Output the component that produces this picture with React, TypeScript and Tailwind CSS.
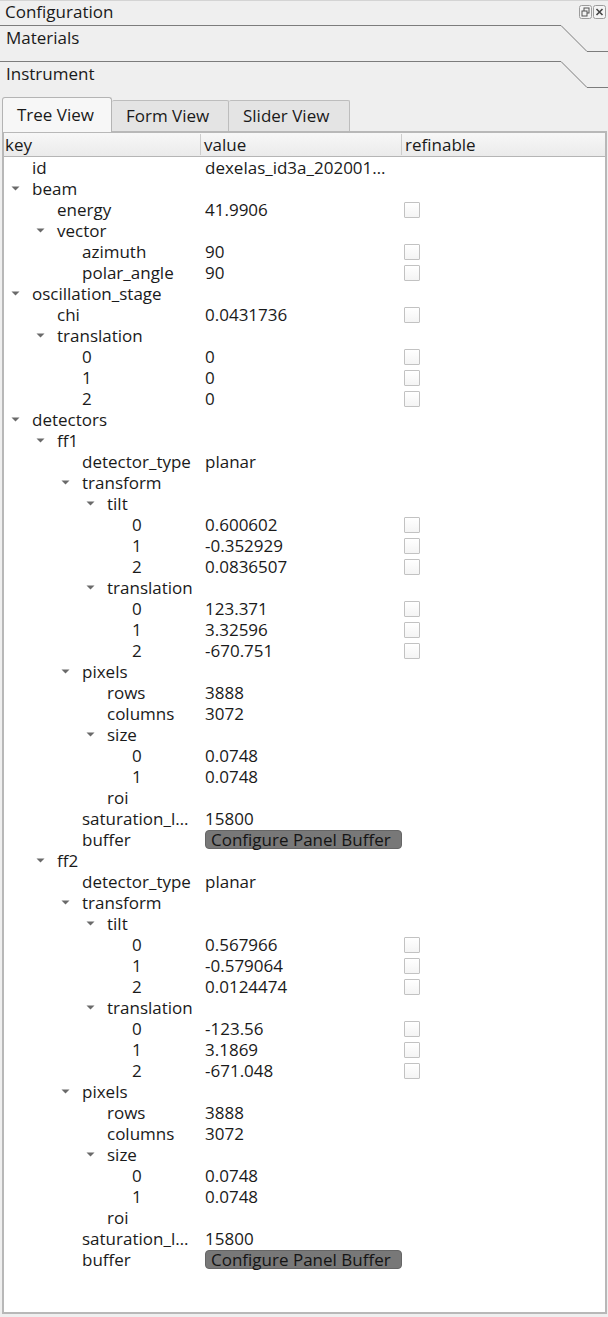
type Row = {
  key: string;
  level: number;
  expanded?: boolean;
  value?: string;
  check?: boolean;
  button?: boolean;
};

const detector = (
  name: string,
  tilt: string[],
  translation: string[],
): Row[] => [
  { key: name, level: 1, expanded: true },
  { key: "detector_type", level: 2, value: "planar" },
  { key: "transform", level: 2, expanded: true },
  { key: "tilt", level: 3, expanded: true },
  ...tilt.map((v, i) => ({ key: String(i), level: 4, value: v, check: true })),
  { key: "translation", level: 3, expanded: true },
  ...translation.map((v, i) => ({
    key: String(i),
    level: 4,
    value: v,
    check: true,
  })),
  { key: "pixels", level: 2, expanded: true },
  { key: "rows", level: 3, value: "3888" },
  { key: "columns", level: 3, value: "3072" },
  { key: "size", level: 3, expanded: true },
  { key: "0", level: 4, value: "0.0748" },
  { key: "1", level: 4, value: "0.0748" },
  { key: "roi", level: 3 },
  { key: "saturation_l…", level: 2, value: "15800" },
  { key: "buffer", level: 2, button: true },
];

const rows: Row[] = [
  { key: "id", level: 0, value: "dexelas_id3a_202001…" },
  { key: "beam", level: 0, expanded: true },
  { key: "energy", level: 1, value: "41.9906", check: true },
  { key: "vector", level: 1, expanded: true },
  { key: "azimuth", level: 2, value: "90", check: true },
  { key: "polar_angle", level: 2, value: "90", check: true },
  { key: "oscillation_stage", level: 0, expanded: true },
  { key: "chi", level: 1, value: "0.0431736", check: true },
  { key: "translation", level: 1, expanded: true },
  { key: "0", level: 2, value: "0", check: true },
  { key: "1", level: 2, value: "0", check: true },
  { key: "2", level: 2, value: "0", check: true },
  { key: "detectors", level: 0, expanded: true },
  ...detector(
    "ff1",
    ["0.600602", "-0.352929", "0.0836507"],
    ["123.371", "3.32596", "-670.751"],
  ),
  ...detector(
    "ff2",
    ["0.567966", "-0.579064", "0.0124474"],
    ["-123.56", "3.1869", "-671.048"],
  ),
];

function SectionHeader({ label }: { label: string }) {
  return (
    <div className="relative h-[36px] px-[6px] pt-[2px]">
      <svg
        className="absolute left-0 top-0"
        width="608"
        height="30"
        viewBox="0 0 608 30"
      >
        <polyline
          points="0,0.5 561,0.5 587,26.5 608,26.5"
          fill="none"
          stroke="#7c7c7c"
          strokeWidth="1"
        />
      </svg>
      <span>{label}</span>
    </div>
  );
}

function Checkbox() {
  return (
    <span className="block h-[16px] w-[16px] rounded-[1px] border border-[#c2c2c2] bg-gradient-to-b from-white to-[#f4f4f4]" />
  );
}

function TreeRow({ row }: { row: Row }) {
  const pad = 28 + row.level * 25;
  return (
    <div className="flex h-[21px] items-center">
      <div className="relative w-[197px] shrink-0 whitespace-nowrap">
        {row.expanded && (
          <svg
            className="absolute top-[8px]"
            style={{ left: pad - 21 }}
            width="9"
            height="5"
            viewBox="0 0 9 5"
          >
            <path d="M0.5 0.5 L8.5 0.5 L4.5 4.5 Z" fill="#6a6a6a" />
          </svg>
        )}
        <span className="block" style={{ paddingLeft: pad }}>
          {row.key}
        </span>
      </div>
      <div className="w-[201px] shrink-0 whitespace-nowrap pl-[4px]">
        {row.button ? (
          <span className="flex h-[19px] w-[197px] items-center rounded-[4px] border border-[#666] bg-[#787878] pl-[5px] text-[#141414]">
            Configure Panel Buffer
          </span>
        ) : (
          row.value
        )}
      </div>
      <div className="pl-[2px]">{row.check && <Checkbox />}</div>
    </div>
  );
}

export default function App() {
  return (
    <div
      className="flex h-[1317px] w-[608px] flex-col overflow-hidden border-t border-[#d4d4d4] bg-[#efefef] text-[17px] leading-[21px] text-[#1a1a1a]"
      style={{ fontFamily: '"Open Sans", "Noto Sans", sans-serif' }}
    >
      <div className="flex h-[24px] items-start justify-between pl-[5px] pr-[2px]">
        <span>Configuration</span>
        <div className="flex gap-[1px] pt-[4px]">
          <svg width="13" height="14" viewBox="0 0 13 14">
            <rect x="0.5" y="0.5" width="12" height="13" rx="2" fill="#f4f4f4" stroke="#9c9c9c" />
            <rect x="5" y="3" width="5" height="5" fill="none" stroke="#555" />
            <rect x="3" y="6" width="5" height="5" fill="#f4f4f4" stroke="#555" />
          </svg>
          <svg width="13" height="14" viewBox="0 0 13 14">
            <rect x="0.5" y="0.5" width="12" height="13" rx="2" fill="#f4f4f4" stroke="#9c9c9c" />
            <path d="M3.5 4 L9.5 10 M9.5 4 L3.5 10" stroke="#444" strokeWidth="1.6" />
          </svg>
        </div>
      </div>
      <SectionHeader label="Materials" />
      <SectionHeader label="Instrument" />

      <div className="flex h-[34px] items-end pl-[2px]">
        <div className="z-10 -mb-[1px] flex h-[35px] w-[110px] items-center rounded-t-[3px] border border-b-0 border-[#b4b4b4] bg-[#f7f7f7] pb-[2px] pl-[14px]">
          Tree View
        </div>
        <div className="flex h-[31px] w-[117px] items-center rounded-t-[2px] border border-b-0 border-l-0 border-[#bdbdbd] bg-[#e4e4e4] pb-[1px] pl-[14px]">
          Form View
        </div>
        <div className="flex h-[31px] w-[121px] items-center rounded-t-[2px] border border-b-0 border-l-0 border-[#bdbdbd] bg-[#e4e4e4] pb-[1px] pl-[14px]">
          Slider View
        </div>
      </div>

      <div className="mb-[3px] ml-[2px] mr-[1px] flex flex-1 flex-col border-2 border-[#b8b8b8] bg-white">
        <div className="flex h-[24px] items-center border-b border-[#b5b5b5] bg-gradient-to-b from-[#f7f7f7] to-[#ebebeb]">
          <div className="w-[197px] shrink-0 border-r border-[#cdcdcd] pl-[1px]">key</div>
          <div className="w-[201px] shrink-0 border-r border-[#cdcdcd] pl-[3px]">value</div>
          <div className="pl-[3px]">refinable</div>
        </div>
        <div>
          {rows.map((row, i) => (
            <TreeRow key={i} row={row} />
          ))}
        </div>
      </div>
    </div>
  );
}
